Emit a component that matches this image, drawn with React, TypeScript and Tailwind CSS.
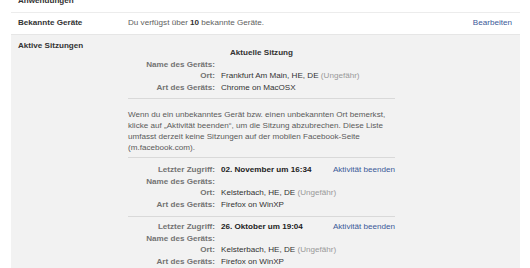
import { ReactNode } from 'react'

interface SessionRow {
  label: string
  value?: ReactNode
}

const linkColor = 'text-[#3b5998]'

function InfoRow({ label, value, action }: SessionRow & { action?: string }) {
  return (
    <div className="flex h-[11.5px] items-center leading-[11.5px]">
      <div className="w-[87px] shrink-0 text-right font-bold text-[#737373]">{label}</div>
      <div className="ml-[6px] flex-1 text-[#333]">{value}</div>
      {action && <a className={`${linkColor} cursor-pointer`}>{action}</a>}
    </div>
  )
}

function Place({ city }: { city: string }) {
  return (
    <>
      {city} <span className="text-[#999]">(Ungefähr)</span>
    </>
  )
}

const sessions = [
  { when: '02. November um 16:34', city: 'Kelsterbach, HE, DE', device: 'Firefox on WinXP' },
  { when: '26. Oktober um 19:04', city: 'Kelsterbach, HE, DE', device: 'Firefox on WinXP' },
]

export default function App() {
  return (
    <div className="relative h-[268px] w-[530px] overflow-hidden bg-white font-['Liberation_Sans',Arial,sans-serif] text-[8.1px] text-[#333]">
      <div className="ml-[11px] mt-[-9px] w-[509px]">
        {/* Anwendungen (cut off at the top) */}
        <div className="flex h-[22px] items-center border-b border-[#ececec] pl-[7px] font-bold">
          Anwendungen
        </div>

        {/* Bekannte Geräte */}
        <div className="flex h-[22px] items-center border-b border-[#e6e6e6] pl-[7px]">
          <div className="w-[110px] shrink-0 font-bold">Bekannte Geräte</div>
          <div className="flex-1 text-[#5e5e5e]">
            Du verfügst über <span className="font-bold text-[#333]">10</span> bekannte Geräte.
          </div>
          <a className={`${linkColor} mr-[8px] cursor-pointer`}>Bearbeiten</a>
        </div>

        {/* Aktive Sitzungen */}
        <div className="flex h-[240px] bg-[#f2f2f2] pl-[7px]">
          <div className="w-[110px] shrink-0 pt-[5px] font-bold leading-[11.5px]">Aktive Sitzungen</div>
          <div className="w-[267px] pt-[12px]">
            <div className="h-[11.5px] text-center font-bold leading-[11.5px]">Aktuelle Sitzung</div>
            <InfoRow label="Name des Geräts:" />
            <InfoRow label="Ort:" value={<Place city="Frankfurt Am Main, HE, DE" />} />
            <InfoRow label="Art des Geräts:" value="Chrome on MacOSX" />

            <div className="mt-[5px] h-px bg-[#d9d9d9]" />

            <p className="mt-[10px] leading-[11px] text-[#5a5a5a]">
              Wenn du ein unbekanntes Gerät bzw. einen unbekannten Ort bemerkst, klicke auf „Aktivität beenden“, um
              die Sitzung abzubrechen. Diese Liste umfasst derzeit keine Sitzungen auf der mobilen Facebook-Seite
              (m.facebook.com).
            </p>

            {sessions.map((s, i) => (
              <div key={i}>
                <div className={`${i === 0 ? 'mt-[4px]' : 'mt-[6px]'} h-px bg-[#d9d9d9]`} />
                <div className={i === 0 ? 'mt-[6px]' : 'mt-[4px]'}>
                  <InfoRow
                    label="Letzter Zugriff:"
                    value={<span className="font-bold text-[#222]">{s.when}</span>}
                    action="Aktivität beenden"
                  />
                  <InfoRow label="Name des Geräts:" />
                  <InfoRow label="Ort:" value={<Place city={s.city} />} />
                  <InfoRow label="Art des Geräts:" value={s.device} />
                </div>
              </div>
            ))}
          </div>
        </div>
      </div>
    </div>
  )
}
